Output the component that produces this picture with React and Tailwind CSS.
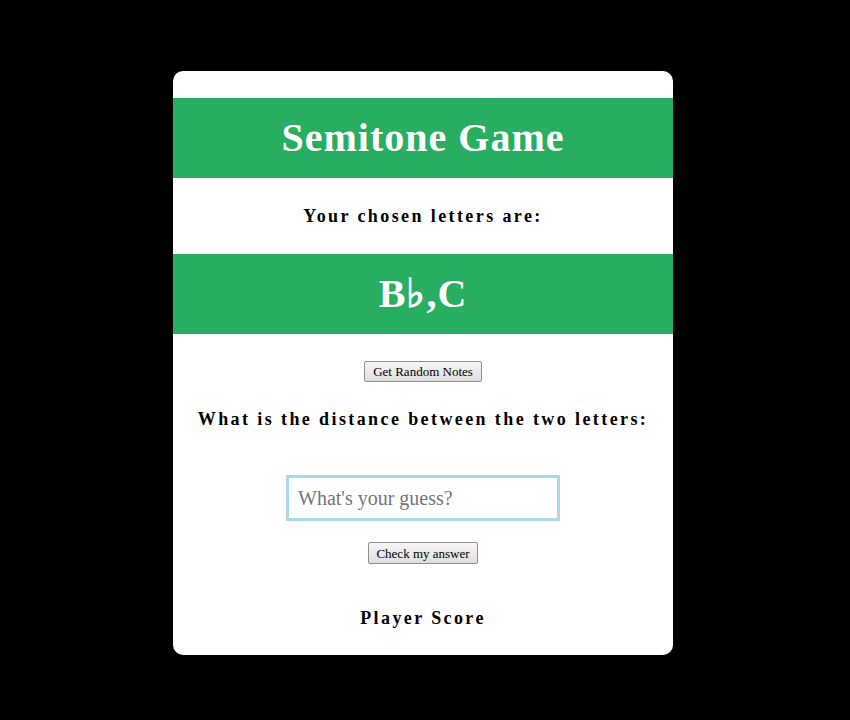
export default function App() {
  return (
    <div className="flex min-h-[720px] w-full items-start justify-center bg-black pt-[71px] pr-[4px] font-['Liberation_Serif',serif]">
      <div className="flex w-[500px] flex-col items-center rounded-[10px] bg-white pt-[27px] pb-[23px]">
        <div className="flex h-[80px] w-full items-center justify-center bg-[#27ae60]">
          <h1 className="text-[40px] font-bold tracking-[1px] text-white">Semitone Game</h1>
        </div>
        <div className="flex h-[76px] items-center justify-center">
          <h3 className="text-[18px] font-bold tracking-[2.4px] text-black">Your chosen letters are:</h3>
        </div>
        <div className="flex h-[80px] w-full items-center justify-center bg-[#27ae60]">
          <span className="text-[40px] font-bold tracking-[1px] text-white">B♭,C</span>
        </div>
        <button className="mt-[27px] h-[21px] rounded-[2px] border border-[#8f8f8f] bg-gradient-to-b from-[#f6f6f6] to-[#dedede] px-[8px] text-[13px] leading-none text-black">
          Get Random Notes
        </button>
        <h3 className="mt-[24px] text-[18px] font-bold tracking-[2.4px] text-black">What is the distance between the two letters:</h3>
        <input
          className="mt-[42px] h-[46px] w-[274px] border-[3px] border-[#add8e6] px-[9px] text-[20px] outline-none placeholder:text-[#757575]"
          placeholder="What's your guess?"
        />
        <button className="mt-[21px] h-[22px] rounded-[2px] border border-[#8f8f8f] bg-gradient-to-b from-[#f6f6f6] to-[#dedede] px-[7px] text-[13px] leading-none text-black">
          Check my answer
        </button>
        <h3 className="mt-[41px] text-[18px] font-bold tracking-[2.4px] text-black">Player Score</h3>
      </div>
    </div>
  );
}
